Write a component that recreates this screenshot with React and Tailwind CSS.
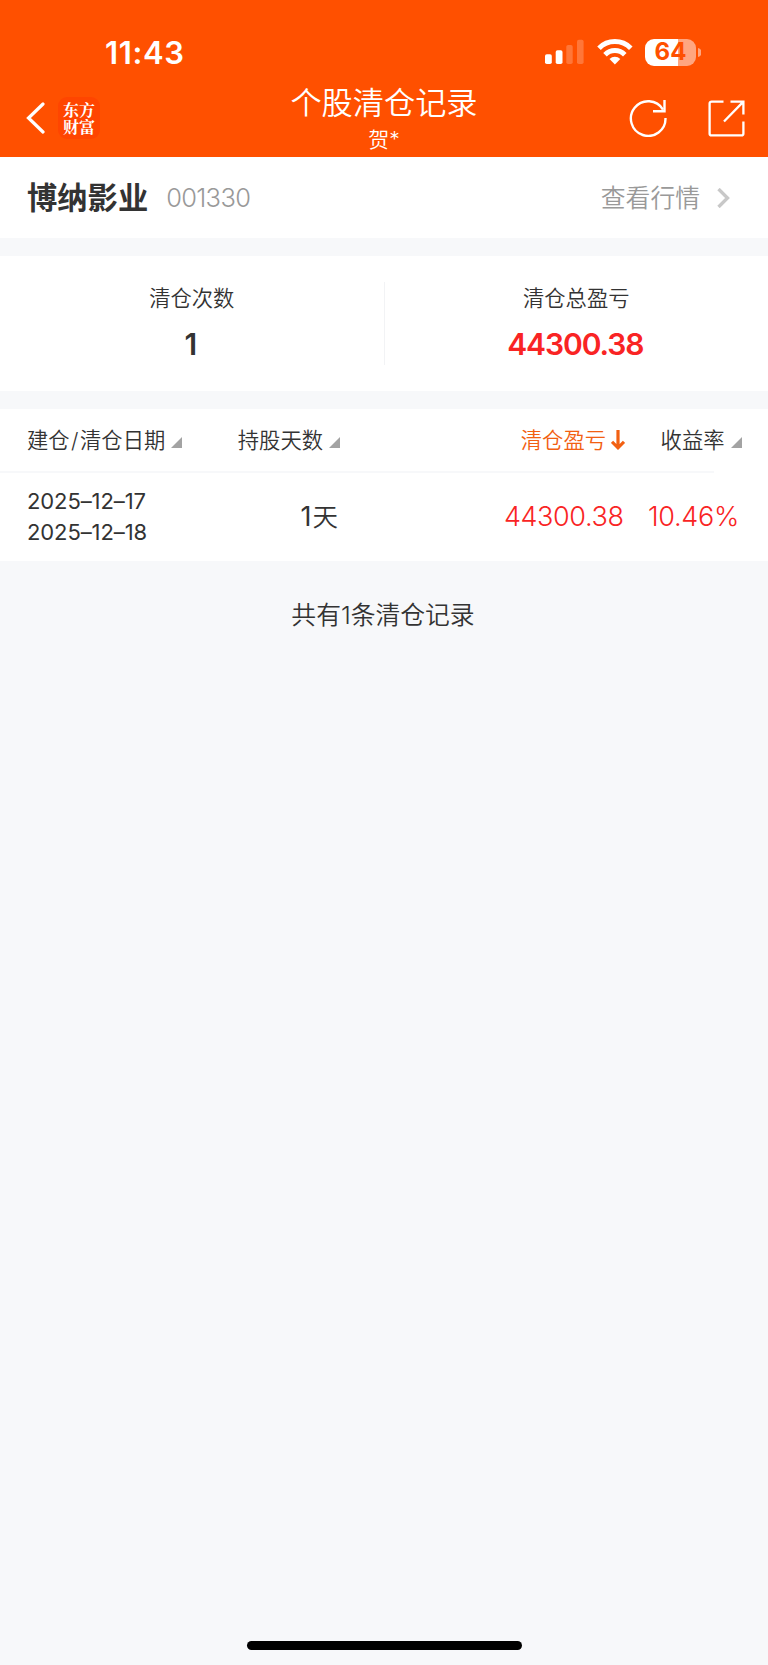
const COLUMNS = [
  { label: ["建仓", "清仓日期"], cell: "w-[185px] pl-[27px]" },
  { label: ["持股天数"], cell: "w-[155px] justify-end" },
  { label: ["清仓盈亏"], cell: "w-[285px] justify-end", active: true },
  { label: ["收益率"], cell: "w-[116.5px] justify-end" },
]

const RECORDS = [
  { opened: "2025–12–17", closed: "2025–12–18", days: 1, profit: "44300.38", rate: "10.46%" },
]

function SignalIcon() {
  return (
    <svg width="40" height="26" viewBox="0 0 40 26" fill="white">
      <rect x="1" y="15.2" width="6.8" height="9.8" rx="1.8" />
      <rect x="11.7" y="11.2" width="6.8" height="13.8" rx="1.8" />
      <rect x="22.3" y="6" width="6.4" height="19" rx="1.8" opacity="0.22" />
      <rect x="33" y="0.8" width="6.6" height="24.2" rx="1.8" opacity="0.22" />
    </svg>
  )
}

function WifiIcon() {
  return (
    <svg width="36" height="26" viewBox="0 0 36 26" fill="none" stroke="white" strokeWidth="5">
      <path d="M2 9.2a22.5 22.5 0 0 1 31.8 0" />
      <path d="M8 15.7a14 14 0 0 1 19.8 0" />
      <path d="M17.9 25.4l-5.4-5.4a7.7 7.7 0 0 1 10.8 0z" fill="white" stroke="none" />
    </svg>
  )
}

function Battery() {
  return (
    <div className="flex items-center gap-[2px]">
      <div className="w-[51px] h-[27px] rounded-[9px] bg-linear-to-r from-white from-64% to-[#ffa680] to-64% flex items-center justify-center">
        <span className="text-[24px] leading-none font-bold text-[#ff5000]">64</span>
      </div>
      <svg width="3" height="9" viewBox="0 0 3 9">
        <path d="M0 0a4.6 4.6 0 0 1 0 9z" fill="#ffa680" />
      </svg>
    </div>
  )
}

function SortMark() {
  return (
    <svg className="mt-[5px] shrink-0" width="11" height="11" viewBox="0 0 11 11">
      <path d="M11 0v11H0z" fill="#a3a3a3" />
    </svg>
  )
}

function SortArrow() {
  return (
    <svg className="mt-px shrink-0" width="14" height="21" viewBox="0 0 14 21" fill="none" stroke="#f26012" strokeWidth="3.2">
      <path d="M7 0v18M1 11.8l6 6 6-6" />
    </svg>
  )
}

function Header() {
  return (
    <header className="h-[157px] bg-[#ff5000] text-white">
      <div className="h-[78px] pt-[26px] pl-[105px] pr-[67px] flex items-center justify-between">
        <span className="text-[31px] leading-none font-semibold tracking-[0.6px]">11:43</span>
        <div className="flex items-center">
          <SignalIcon />
          <div className="w-[13px]" />
          <WifiIcon />
          <div className="w-[12px]" />
          <Battery />
        </div>
      </div>

      <div className="h-[80px] flex items-center">
        <div className="w-[256px] pl-[26px] flex items-center gap-[13px]">
          <svg width="19" height="32" viewBox="0 0 19 32" fill="none" stroke="white" strokeWidth="3.2" strokeLinecap="round">
            <path d="M17 2L2.5 16 17 30" />
          </svg>
          <div className="w-[42px] h-[42px] rounded-[9px] bg-[#ff4500] flex items-center justify-center">
            <span className="w-[32px] break-all font-['Noto_Serif_CJK_SC','Noto_Sans_CJK_SC',serif] text-[16px] leading-[17.5px] font-bold">东方财富</span>
          </div>
        </div>
        <div className="w-[256px] pt-[4px] flex flex-col items-center">
          <h1 className="text-[31.2px] leading-[38px] font-[350]">个股清仓记录</h1>
          <p className="text-[21px] leading-[35px] font-[350]">贺*</p>
        </div>
        <div className="w-[256px] pr-[23px] flex items-center justify-end gap-[41px]">
          <svg width="38" height="38" viewBox="0 0 38 38" fill="none" stroke="white" strokeWidth="2.4">
            <path d="M36.5 19A17.3 17.3 0 1 1 34 10.6" />
            <path d="M35.5 1v11.2H24" />
          </svg>
          <svg width="37" height="37" viewBox="0 0 37 37" fill="none" stroke="white" strokeWidth="2.3">
            <path d="M15.5 1.6H3.6a2 2 0 0 0-2 2v29.8a2 2 0 0 0 2 2h29.8a2 2 0 0 0 2-2V21.5" />
            <path d="M22.5 1.6h12.9v13M35.4 1.6L16 21.5" />
          </svg>
        </div>
      </div>
    </header>
  )
}

export default function App() {
  return (
    <div className="w-[768px] h-[1665px] flex flex-col bg-[#f7f8fa] text-[#333333] font-[Inter,'Noto_Sans_CJK_SC',sans-serif]">
      <Header />

      <section className="h-[81px] bg-white pl-[27px] pr-[38px] flex items-center">
        <h2 className="pt-[2px] text-[30.3px] leading-none font-bold">博纳影业</h2>
        <span className="ml-[18px] text-[25.5px] leading-none font-[350] text-[#999999] tracking-[-0.7px]">001330</span>
        <span className="ml-auto pt-[2px] text-[24.8px] leading-none font-[350] text-[#999999]">查看行情</span>
        <svg className="ml-[17px]" width="13" height="20" viewBox="0 0 13 20" fill="none" stroke="#c8c8c8" strokeWidth="3.4">
          <path d="M1.5 1l9 9-9 9" />
        </svg>
      </section>

      {/* totals */}
      <section className="mt-[18px] h-[135px] bg-white flex items-center">
        <div className="flex-1 flex flex-col items-center">
          <span className="text-[21.3px] leading-[28px] font-[350]">清仓次数</span>
          <span className="mt-[14px] mb-px pr-[2px] text-[30px] leading-[36px] font-semibold">1</span>
        </div>
        <div className="w-px h-[83px] bg-[#f2f3f5]" />
        <div className="flex-1 flex flex-col items-center">
          <span className="text-[21.3px] leading-[28px] font-[350]">清仓总盈亏</span>
          <span className="mt-[14px] mb-px pr-[2px] text-[30px] leading-[36px] font-semibold text-[#f92424] tracking-[-1.1px]">44300.38</span>
        </div>
      </section>

      <section className="mt-[18px] bg-white">
        <div className="h-[62px] flex items-center">
          {COLUMNS.map(col => (
            <div key={col.label[0]} className={`flex items-center shrink-0 ${col.cell} ${col.active ? "gap-[5px] text-[#f26012]" : "gap-[6px]"}`}>
              <span className="pt-[2px] text-[21.3px] leading-none font-[350] whitespace-nowrap">
                {col.label[0]}
                {col.label[1] && <><span className="mx-[1.5px]">/</span>{col.label[1]}</>}
              </span>
              {col.active ? <SortArrow /> : <SortMark />}
            </div>
          ))}
        </div>
        <div className="w-[714px] h-[2px] bg-[#f7f8fa]" />
        {RECORDS.map(row => (
          <div key={row.opened} className="h-[88px] flex items-center">
            <div className="w-[183px] pl-[27px] flex flex-col text-[22px] leading-[31px] font-normal tracking-[-0.1px] whitespace-nowrap">
              <span>{row.opened}</span>
              <span>{row.closed}</span>
            </div>
            <span className="w-[155px] pb-[2px] text-right text-[25.5px] leading-none font-[350]">
              <span className="mr-px text-[27px] font-normal">{row.days}</span>天
            </span>
            <span className="w-[285.5px] pb-px text-right text-[27px] leading-none font-[350] text-[#f92424] tracking-[-0.4px]">{row.profit}</span>
            <span className="w-[115.5px] pb-px text-right text-[27px] leading-none font-[350] text-[#f92424] tracking-[-0.3px]">{row.rate}</span>
          </div>
        ))}
      </section>

      <p className="mt-[36px] pr-[2px] text-center text-[24.8px] leading-[36px] font-[350]">共有1条清仓记录</p>

      {/* home indicator */}
      <div className="mt-auto mb-[15px] mx-auto w-[275px] h-[9px] rounded-full bg-black" />
    </div>
  )
}
